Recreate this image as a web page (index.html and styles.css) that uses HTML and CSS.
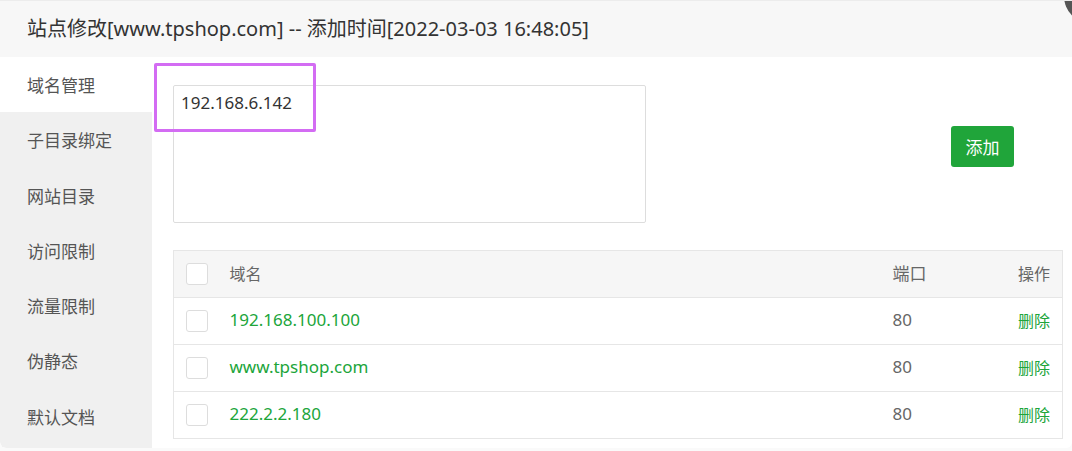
FILE: index.html
```html
<!DOCTYPE html>
<html lang="zh-CN">
<head>
  <meta charset="UTF-8" />
  <meta name="viewport" content="width=device-width, initial-scale=1.0" />
  <title>站点修改</title>
  <link rel="stylesheet" href="styles.css">
</head>
<body>
  <div class="dialog">
    <div class="dialog-title">站点修改[www.tpshop.com] -- 添加时间[2022-03-03 16:48:05]</div>
    <span class="close-btn"></span>

    <div class="dialog-body">
      <ul class="side-menu">
        <li class="active">域名管理</li>
        <li>子目录绑定</li>
        <li>网站目录</li>
        <li>访问限制</li>
        <li>流量限制</li>
        <li>伪静态</li>
        <li>默认文档</li>
      </ul>

      <div class="content">
        <div class="add-row">
          <textarea class="domain-input">192.168.6.142</textarea>
          <button class="btn-add">添加</button>
        </div>

        <table class="domain-table">
          <thead>
            <tr>
              <th class="col-check"><span class="checkbox"></span></th>
              <th>域名</th>
              <th class="col-port">端口</th>
              <th class="col-op">操作</th>
            </tr>
          </thead>
          <tbody>
            <tr>
              <td class="col-check"><span class="checkbox"></span></td>
              <td class="domain">192.168.100.100</td>
              <td class="col-port">80</td>
              <td class="col-op"><a href="#">删除</a></td>
            </tr>
            <tr>
              <td class="col-check"><span class="checkbox"></span></td>
              <td class="domain">www.tpshop.com</td>
              <td class="col-port">80</td>
              <td class="col-op"><a href="#">删除</a></td>
            </tr>
            <tr>
              <td class="col-check"><span class="checkbox"></span></td>
              <td class="domain">222.2.2.180</td>
              <td class="col-port">80</td>
              <td class="col-op"><a href="#">删除</a></td>
            </tr>
          </tbody>
        </table>
      </div>
    </div>

    <!-- annotation box from the screenshot -->
    <div class="highlight"></div>
  </div>
</body>
</html>
```

FILE: styles.css
```css
* {
  box-sizing: border-box;
}
body {
  margin: 0;
  background: #fafafa;
  font-family: "Noto Sans", "Noto Sans CJK SC", sans-serif;
  color: #333;
  overflow: hidden;
}
.dialog {
  position: relative;
  width: 1072px;
  height: 448px;
  background: #fff;
  border-top: 1px solid #ececec;
  border-radius: 0 0 6px 6px;
  display: flex;
  flex-direction: column;
  overflow: hidden;
}
.dialog-title {
  height: 56px;
  padding-left: 27px;
  line-height: 56px;
  font-size: 20px;
  color: #333;
  background: #f7f7f7;
  white-space: nowrap;
}
.close-btn {
  position: absolute;
  top: -33px;
  right: -48px;
  width: 56px;
  height: 56px;
  border-radius: 50%;
  background: #555;
}
.dialog-body {
  flex: 1;
  display: flex;
}
.side-menu {
  width: 152px;
  margin: 0;
  padding: 0;
  list-style: none;
  background: #f0f0f0;
  border-bottom-left-radius: 6px;
}
.side-menu li {
  height: 55.3px;
  line-height: 57px;
  padding-left: 27px;
  font-size: 17px;
  color: #555;
}
.side-menu li.active {
  background: #fff;
}
.content {
  flex: 1;
  padding: 28px 9px 0 21px;
}
.add-row {
  display: flex;
  align-items: flex-start;
}
.domain-input {
  width: 473px;
  height: 138px;
  padding: 5px 7px;
  border: 1px solid #ddd;
  border-radius: 2px;
  font-family: inherit;
  font-size: 17px;
  line-height: 24px;
  color: #333;
  resize: none;
  outline: none;
}
.btn-add {
  margin: 41px 49px 0 auto;
  width: 63px;
  height: 41px;
  border: none;
  border-radius: 3px;
  background: #20a53a;
  color: #fff;
  font-family: inherit;
  font-size: 17px;
  cursor: pointer;
}
.domain-table {
  width: 100%;
  margin-top: 27px;
  border-collapse: collapse;
  border: 1px solid #e6e6e6;
}
.domain-table th,
.domain-table td {
  height: 47px;
  padding: 0 0 3px;
  text-align: left;
  font-weight: normal;
  font-size: 16px;
  color: #666;
  border-bottom: 1px solid #e6e6e6;
}
.domain-table thead tr {
  background: #f6f6f6;
}
.domain-table .col-check {
  width: 56px;
  padding: 0 0 0 12px;
}
.checkbox {
  display: block;
  width: 22px;
  height: 22px;
  border: 1px solid #ddd;
  border-radius: 3px;
  background: #fff;
}
.domain-table .domain {
  color: #20a53a;
  font-size: 17px;
}
.domain-table .col-port {
  width: 110px;
  font-size: 17px;
}
.domain-table .col-op {
  width: 60px;
  padding-right: 12px;
  text-align: right;
}
.domain-table .col-op a {
  color: #20a53a;
  text-decoration: none;
}
.highlight {
  position: absolute;
  left: 154px;
  top: 62px;
  width: 162px;
  height: 69px;
  border: 3px solid #d36cf3;
  border-radius: 2px;
}
```
